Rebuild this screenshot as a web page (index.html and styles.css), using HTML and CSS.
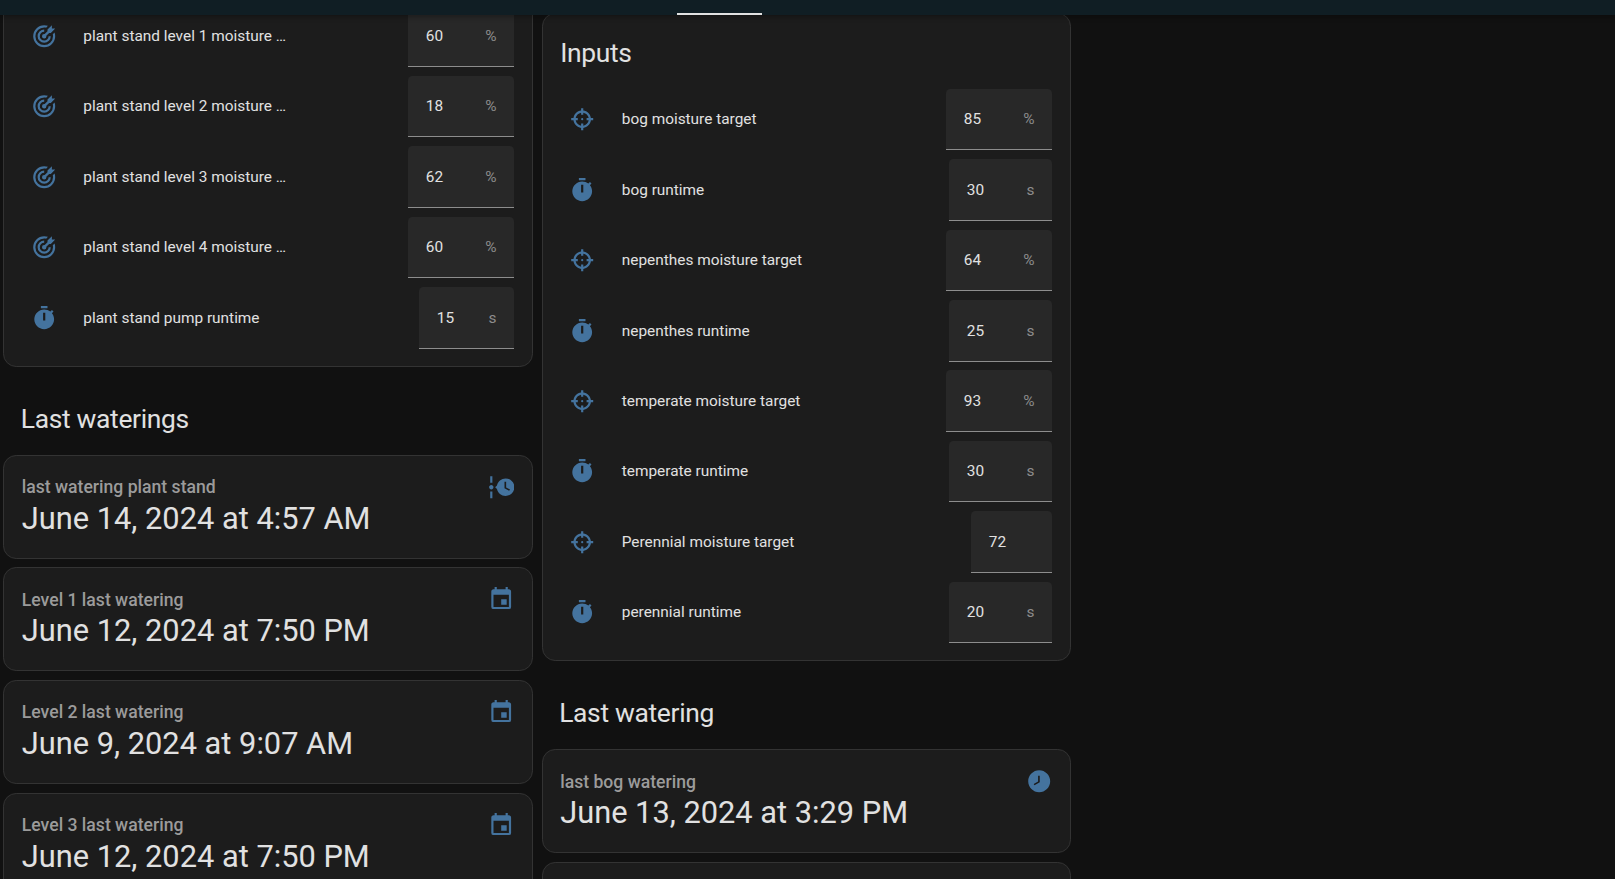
FILE: index.html
```
<!DOCTYPE html>
<html lang="en">
<head>
<meta charset="utf-8">
<title>Plants</title>
<link rel="stylesheet" href="styles.css">
</head>
<body>
<svg class="sprite" aria-hidden="true">
  <symbol id="bullseye" viewBox="0 0 24 24"><path d="M12 2A10 10 0 0 0 2 12A10 10 0 0 0 12 22A10 10 0 0 0 22 12C22 10.84 21.79 9.69 21.39 8.61L19.79 10.21C19.93 10.8 20 11.4 20 12A8 8 0 0 1 12 20A8 8 0 0 1 4 12A8 8 0 0 1 12 4C12.6 4 13.2 4.07 13.79 4.21L15.4 2.6C14.31 2.21 13.16 2 12 2M19 2L15 6V7.5L12.45 10.05C12.3 10 12.15 10 12 10A2 2 0 0 0 10 12A2 2 0 0 0 12 14A2 2 0 0 0 14 12C14 11.85 14 11.7 13.95 11.55L16.5 9H18L22 5H19V2M12 6A6 6 0 0 0 6 12A6 6 0 0 0 12 18A6 6 0 0 0 18 12H16A4 4 0 0 1 12 16A4 4 0 0 1 8 12A4 4 0 0 1 12 8V6Z"/></symbol>
  <symbol id="timer" viewBox="0 0 24 24"><path d="M19.03 7.39L20.45 5.97C20 5.46 19.55 5 19.04 4.56L17.62 6C16.07 4.74 14.12 4 12 4C7.03 4 3 8.03 3 13C3 17.97 7.02 22 12 22C17 22 21 17.97 21 13C21 10.88 20.26 8.93 19.03 7.39M13 14H11V7H13V14M15 1H9V3H15V1Z"/></symbol>
  <symbol id="target" viewBox="0 0 24 24"><path d="M11,2V4.07C7.38,4.53 4.53,7.38 4.07,11H2V13H4.07C4.53,16.62 7.38,19.47 11,19.93V22H13V19.93C16.62,19.47 19.47,16.62 19.93,13H22V11H19.93C19.47,7.38 16.62,4.53 13,4.07V2M11,6.08V8H13V6.09C15.5,6.5 17.5,8.5 17.92,11H16V13H17.91C17.5,15.5 15.5,17.5 13,17.92V16H11V17.91C8.5,17.5 6.5,15.5 6.08,13H8V11H6.09C6.5,8.5 8.5,6.5 11,6.08M12,11A1,1 0 0,0 11,12A1,1 0 0,0 12,13A1,1 0 0,0 13,12A1,1 0 0,0 12,11Z"/></symbol>
  <symbol id="calendar" viewBox="0 0 24 24"><path d="M19,19H5V8H19M16,1V3H8V1H6V3H5C3.89,3 3,3.89 3,5V19A2,2 0 0,0 5,21H19A2,2 0 0,0 21,19V5C21,3.89 20.1,3 19,3H18V1M17,12H12V17H17V12Z"/></symbol>
  <symbol id="clock" viewBox="0 0 24 24"><path d="M12 2C6.5 2 2 6.5 2 12S6.5 22 12 22 22 17.5 22 12 17.5 2 12 2M12.5 13L7.7 15.8L7 14.5L11 12.2V7H12.5V13Z"/></symbol>
  <symbol id="timeline" viewBox="0 0 24 24"><path fill-rule="evenodd" d="M2 2H4V8H2V2M2 16H4V22H2V16M5 12C5 13.11 4.11 14 3 14S1 13.11 1 12 1.9 10 3 10 5 10.9 5 12M16 4C12.14 4 8.94 6.74 8.16 10.37L6.5 12L8.16 13.63C8.94 17.26 12.14 20 16 20C20.42 20 24 16.42 24 12S20.42 4 16 4M19.2 15.2L15 13V7H16.5V12.2L20 14L19.2 15.2Z"/></symbol>
</svg>

<header class="app-header"><div class="tab-indicator"></div></header>

<main class="view">
  <section class="column column-stand">
    <div class="card entities">
      <div class="row"><svg class="icon"><use href="#bullseye"/></svg><span class="label">plant stand level 1 moisture …</span><div class="field"><span>60</span><span class="unit">%</span></div></div>
      <div class="row"><svg class="icon"><use href="#bullseye"/></svg><span class="label">plant stand level 2 moisture …</span><div class="field"><span>18</span><span class="unit">%</span></div></div>
      <div class="row"><svg class="icon"><use href="#bullseye"/></svg><span class="label">plant stand level 3 moisture …</span><div class="field"><span>62</span><span class="unit">%</span></div></div>
      <div class="row"><svg class="icon"><use href="#bullseye"/></svg><span class="label">plant stand level 4 moisture …</span><div class="field"><span>60</span><span class="unit">%</span></div></div>
      <div class="row"><svg class="icon"><use href="#timer"/></svg><span class="label">plant stand pump runtime</span><div class="field field-narrow"><span>15</span><span class="unit">s</span></div></div>
    </div>
    <h1 class="group-title">Last waterings</h1>
    <div class="card entity">
      <div class="entity-head"><span>last watering plant stand</span><svg class="icon"><use href="#timeline"/></svg></div>
      <div class="entity-value">June 14, 2024 at 4:57 AM</div>
    </div>
    <div class="card entity">
      <div class="entity-head"><span>Level 1 last watering</span><svg class="icon"><use href="#calendar"/></svg></div>
      <div class="entity-value">June 12, 2024 at 7:50 PM</div>
    </div>
    <div class="card entity">
      <div class="entity-head"><span>Level 2 last watering</span><svg class="icon"><use href="#calendar"/></svg></div>
      <div class="entity-value">June 9, 2024 at 9:07 AM</div>
    </div>
    <div class="card entity">
      <div class="entity-head"><span>Level 3 last watering</span><svg class="icon"><use href="#calendar"/></svg></div>
      <div class="entity-value">June 12, 2024 at 7:50 PM</div>
    </div>
  </section>

  <section class="column column-inputs">
    <div class="card entities">
      <h1 class="card-title">Inputs</h1>
      <div class="row"><svg class="icon"><use href="#target"/></svg><span class="label">bog moisture target</span><div class="field"><span>85</span><span class="unit">%</span></div></div>
      <div class="row"><svg class="icon"><use href="#timer"/></svg><span class="label">bog runtime</span><div class="field field-seconds"><span>30</span><span class="unit">s</span></div></div>
      <div class="row"><svg class="icon"><use href="#target"/></svg><span class="label">nepenthes moisture target</span><div class="field"><span>64</span><span class="unit">%</span></div></div>
      <div class="row"><svg class="icon"><use href="#timer"/></svg><span class="label">nepenthes runtime</span><div class="field field-seconds"><span>25</span><span class="unit">s</span></div></div>
      <div class="row"><svg class="icon"><use href="#target"/></svg><span class="label">temperate moisture target</span><div class="field"><span>93</span><span class="unit">%</span></div></div>
      <div class="row"><svg class="icon"><use href="#timer"/></svg><span class="label">temperate runtime</span><div class="field field-seconds"><span>30</span><span class="unit">s</span></div></div>
      <div class="row"><svg class="icon"><use href="#target"/></svg><span class="label">Perennial moisture target</span><div class="field field-bare"><span>72</span></div></div>
      <div class="row"><svg class="icon"><use href="#timer"/></svg><span class="label">perennial runtime</span><div class="field field-seconds"><span>20</span><span class="unit">s</span></div></div>
    </div>
    <h1 class="group-title">Last watering</h1>
    <div class="card entity">
      <div class="entity-head"><span>last bog watering</span><svg class="icon"><use href="#clock"/></svg></div>
      <div class="entity-value">June 13, 2024 at 3:29 PM</div>
    </div>
    <div class="card entity"></div>
  </section>
</main>
</body>
</html>
```
FILE: styles.css
```
* {
  box-sizing: border-box;
}

html {
  height: 100%;
  overflow: hidden;
}

body {
  margin: 0;
  height: 100%;
  overflow: hidden;
  display: flex;
  flex-direction: column;
  background: #111111;
  color: #e1e1e1;
  font-family: Roboto, "Noto Sans", sans-serif;
  font-size: 15.4px;
  -webkit-font-smoothing: antialiased;
}

.sprite {
  display: none;
}

.app-header {
  flex: none;
  height: 15px;
  display: flex;
  align-items: flex-end;
  background: #101e24;
  box-shadow: 0 1px 6px rgba(0, 0, 0, 0.4);
  z-index: 1;
}

.tab-indicator {
  width: 85px;
  height: 2px;
  margin-left: 677px;
  background: #e1e1e1;
}

.view {
  flex: 1;
  min-height: 0;
  display: flex;
  gap: 9.2px;
  padding-left: 3.2px;
  overflow: hidden;
}

.column {
  flex: none;
  width: 529.6px;
}

.column-stand {
  margin-top: -28.2px;
}

.column-inputs {
  width: 529.2px;
  margin-top: -1.9px;
  margin-left: -0.4px;
}

.card {
  background: #1c1c1c;
  border: 1px solid #333333;
  border-radius: 13.2px;
}

.entities {
  padding: 17.6px 17.6px 17.2px;
}

.column-inputs .entities {
  padding-top: 0;
}

.card-title {
  margin: 0;
  padding: 13.2px 0 8.8px;
  font-size: 26.4px;
  font-weight: 400;
  line-height: 52.8px;
  letter-spacing: -0.012em;
}

.row {
  display: flex;
  align-items: center;
  height: 61.6px;
}

.row + .row {
  margin-top: 8.8px;
}

.icon {
  flex: none;
  width: 26.4px;
  height: 26.4px;
  fill: #44739e;
}

.row .icon {
  margin: 0 26.4px 0 8.8px;
}

.label {
  flex: 1;
  margin-top: -0.4px;
  white-space: nowrap;
}

.field {
  display: flex;
  align-items: center;
  justify-content: space-between;
  width: 106px;
  height: 61.6px;
  padding: 0.6px 17.6px 0;
  background: #282828;
  border-bottom: 1px solid #8d8d8d;
  border-radius: 4.4px 4.4px 0 0;
  letter-spacing: 0.009375em;
}

.field-seconds {
  width: 103px;
}

.field-narrow {
  width: 95px;
}

.field-bare {
  width: 81px;
}

.unit {
  color: #8d8d8d;
}

.group-title {
  margin: 0;
  padding: 26px 17.6px 9.2px;
  height: 88px;
  font-size: 26.4px;
  font-weight: 400;
  line-height: 52.8px;
  letter-spacing: -0.012em;
}

.entity {
  height: 103.8px;
  padding: 9.2px 17.6px 0;
}

.entity + .entity {
  margin-top: 8.8px;
}

.entity-head {
  display: flex;
  align-items: center;
  justify-content: space-between;
  height: 44px;
  color: #9b9b9b;
  font-size: 17.6px;
  font-weight: 500;
}

.entity-value {
  margin-top: -5.2px;
  font-size: 30.8px;
  line-height: 30.8px;
  white-space: nowrap;
}
```
